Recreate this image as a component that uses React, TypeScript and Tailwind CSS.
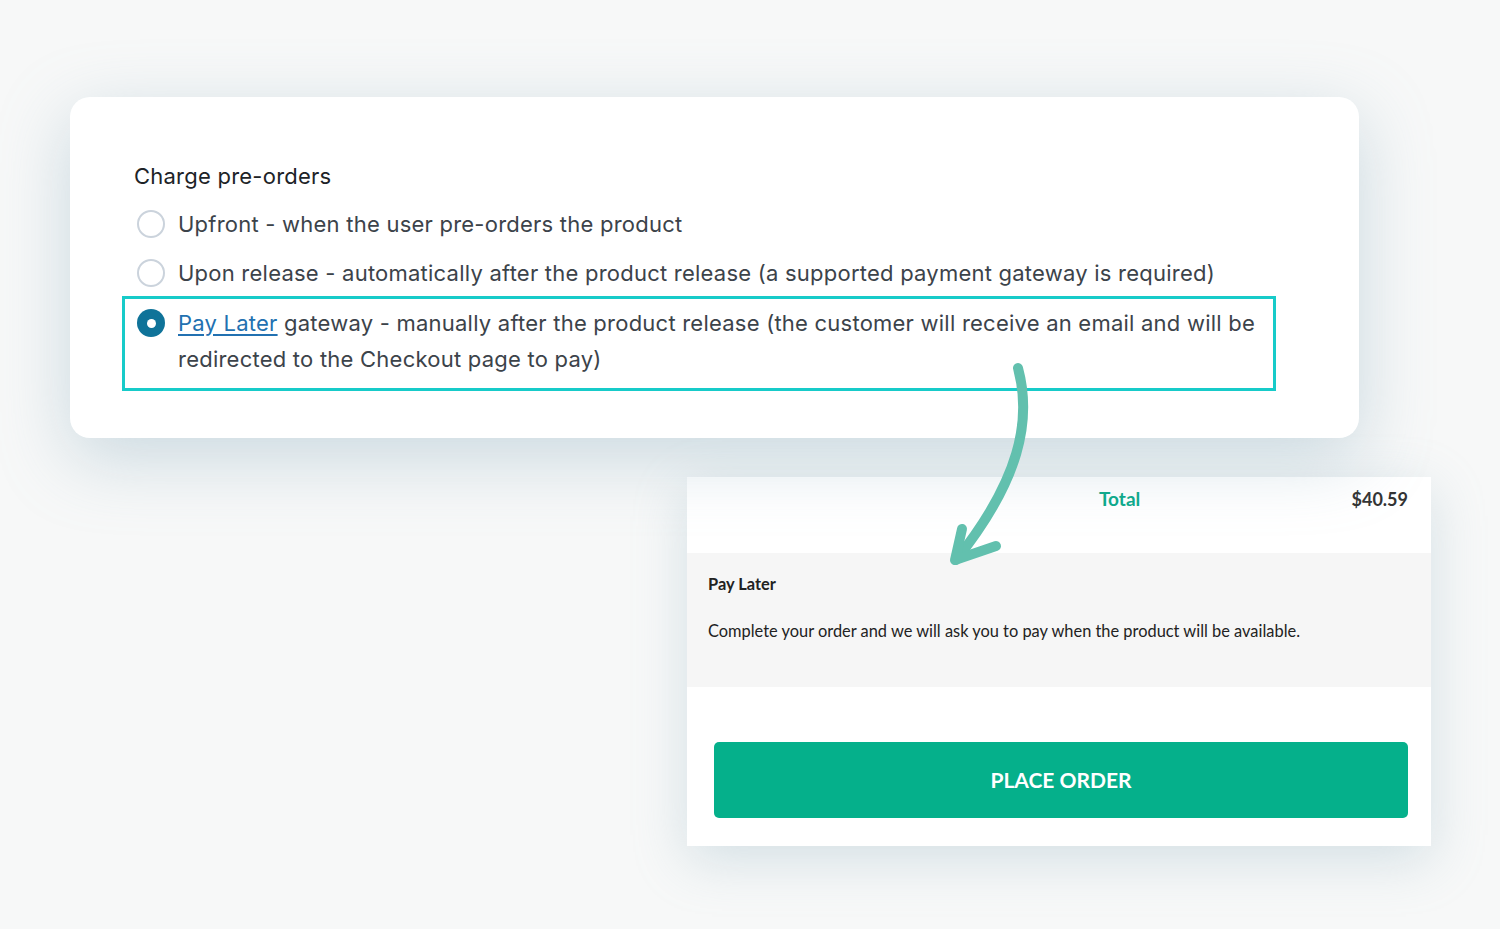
import React from 'react';

function Radio({ checked }: { checked?: boolean }) {
  if (checked) {
    return (
      <span className="flex h-[28px] w-[28px] shrink-0 items-center justify-center rounded-full bg-[#0f7399]">
        <span className="h-[9px] w-[9px] rounded-full bg-white" />
      </span>
    );
  }
  return <span className="h-[28px] w-[28px] shrink-0 rounded-full border-2 border-[#cbd3dc] bg-white" />;
}

function Arrow() {
  return (
    <svg
      className="pointer-events-none absolute left-0 top-0 z-20"
      width="1500"
      height="929"
      viewBox="0 0 1500 929"
      fill="none"
    >
      <path
        d="M1018 368 C1032 420 1020 480 956 560"
        stroke="#62c0ae"
        strokeWidth={10}
        strokeLinecap="round"
      />
      <path
        d="M962 529 L955 560 L996 546"
        stroke="#62c0ae"
        strokeWidth={10}
        strokeLinecap="round"
        strokeLinejoin="round"
      />
    </svg>
  );
}

export default function App() {
  return (
    <div className="relative h-[929px] w-[1500px] overflow-hidden bg-[#f7f8f8] pt-[97px]">
      {/* settings card */}
      <div className="relative z-10 ml-[70px] h-[341px] w-[1289px] rounded-[20px] bg-white px-[52px] pt-[63px] shadow-[0_20px_70px_rgba(140,175,190,0.42)]">
        <div className="pl-[12px] font-['Inter',sans-serif] text-[22px] leading-[32px] tracking-[0.23px] text-[#1d2327]">
          Charge pre-orders
        </div>
        <div className="mt-[15px] flex flex-col gap-[15px] font-['Inter',sans-serif] text-[22px] tracking-[0.23px] text-[#3c434a]">
          <label className="flex items-center gap-[13px] pl-[15px] leading-[34px]">
            <Radio />
            <span>Upfront - when the user pre-orders the product</span>
          </label>
          <label className="flex items-center gap-[13px] pl-[15px] leading-[34px]">
            <Radio />
            <span>Upon release - automatically after the product release (a supported payment gateway is required)</span>
          </label>
        </div>
        <div className="mt-[6px] w-[1154px] border-[3px] border-[#17cbc9] pb-[11px] pl-[12px] pr-[8px] pt-[6px] font-['Inter',sans-serif] text-[22px] leading-[36px] tracking-[0.23px] text-[#3c434a]">
          <div className="flex items-start gap-[13px]">
            <div className="flex h-[36px] items-center">
              <Radio checked />
            </div>
            <p>
              <a className="text-[#2271b1] underline underline-offset-[3px]">Pay Later</a> gateway - manually after the
              product release (the customer will receive an email and will be redirected to the Checkout page to pay)
            </p>
          </div>
        </div>
      </div>

      {/* checkout card */}
      <div className="ml-[687px] mt-[39px] w-[744px] bg-white font-['Lato',sans-serif] shadow-[0_14px_50px_rgba(140,175,190,0.32)]">
        <div className="flex h-[76px] items-start pt-[8px]">
          <div className="w-[412px]" />
          <div className="flex-1 text-[19px] font-bold text-[#0aa98a]">Total</div>
          <div className="pr-[23px] pt-[1px] text-[18px] font-bold text-[#333333]">$40.59</div>
        </div>
        <div className="h-[134px] bg-[#f6f6f6] px-[21px] pt-[19px] text-[16.4px] text-[#222222]">
          <div className="font-bold leading-[24px]">Pay Later</div>
          <div className="mt-[23px] leading-[24px]">
            Complete your order and we will ask you to pay when the product will be available.
          </div>
        </div>
        <div className="pb-[28px] pl-[27px] pr-[23px] pt-[55px]">
          <button className="flex h-[76px] w-full items-center justify-center rounded-[5px] bg-[#05b08b] text-[21px] font-bold uppercase text-white">
            Place Order
          </button>
        </div>
      </div>

      <Arrow />
    </div>
  );
}
